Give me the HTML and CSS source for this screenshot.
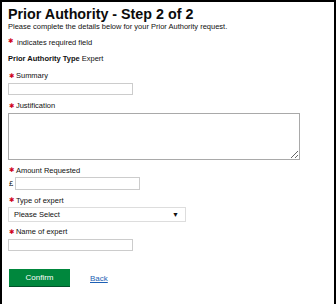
FILE: index.html
```html
<!DOCTYPE html>
<html lang="en">
<head>
  <meta charset="UTF-8" />
  <meta name="viewport" content="width=device-width, initial-scale=1.0" />
  <title>Prior Authority - Step 2 of 2</title>
  <link rel="stylesheet" href="styles.css">
</head>
<body>
  <div class="page">
    <h1 class="title">Prior Authority - Step 2 of 2</h1>
    <p class="intro">Please complete the details below for your Prior Authority request.</p>
    <p class="req-note"><span class="req">✱</span> indicates required field</p>
    <p class="type-row"><strong>Prior Authority Type</strong> Expert</p>

    <div class="field">
      <label for="summary"><span class="req">✱</span>Summary</label>
      <input type="text" id="summary" class="text-input" />
    </div>

    <div class="field">
      <label for="justification"><span class="req">✱</span>Justification</label>
      <textarea id="justification" class="text-area"></textarea>
    </div>

    <div class="field">
      <label for="amount"><span class="req">✱</span>Amount Requested</label>
      <div class="money">
        <span class="pound">£</span>
        <input type="text" id="amount" class="text-input" />
      </div>
    </div>

    <div class="field">
      <label for="expertType"><span class="req">✱</span>Type of expert</label>
      <div class="select-box" id="expertType">
        <span>Please Select</span>
        <span class="arrow">▼</span>
      </div>
    </div>

    <div class="field field-tight">
      <label for="expertName"><span class="req">✱</span>Name of expert</label>
      <input type="text" id="expertName" class="text-input" />
    </div>

    <div class="actions">
      <button class="btn-confirm">Confirm</button>
      <a href="#" class="back-link">Back</a>
    </div>
  </div>
</body>
</html>
```

FILE: styles.css
```css
html, body {
  height: 100%;
}

body {
  margin: 0;
  font-family: "Liberation Sans", Arial, sans-serif;
  color: #111;
  background: #fff;
}

.page {
  width: 336px;
  min-height: 100%;
  box-sizing: border-box;
  border: 2px solid #000;
  border-bottom: none;
  padding: 4px 5px 0 6px;
}

.title {
  margin: 0;
  font-size: 14.3px;
  line-height: 16px;
  font-weight: bold;
  color: #0b0b0b;
}

.intro {
  margin: 0;
  font-size: 7.5px;
  line-height: 10px;
}

.req-note {
  margin: 5.5px 0 0;
  font-size: 7.5px;
  line-height: 10px;
}

.type-row {
  margin: 6.5px 0 0;
  font-size: 7.5px;
  line-height: 10px;
}

.req {
  color: #d0021b;
  font-family: "DejaVu Sans", sans-serif;
  font-size: 6.5px;
  line-height: 0;
  vertical-align: 0.5px;
  margin-right: 1.5px;
}

.req-note .req {
  vertical-align: 1.5px;
}

.field {
  margin-top: 6px;
}

.type-row + .field {
  margin-top: 7px;
}

.field-tight {
  margin-top: 5px;
}

.field label {
  display: block;
  font-size: 7.5px;
  line-height: 10px;
  padding-left: 1px;
  margin-bottom: 1.5px;
}

.text-input {
  display: block;
  box-sizing: border-box;
  width: 125px;
  height: 12.5px;
  margin: 0;
  padding: 0 3px;
  border: 1px solid #ccc;
  border-radius: 0;
  font-size: 8px;
}

.text-area {
  display: block;
  box-sizing: border-box;
  width: 292px;
  height: 47px;
  margin: 0;
  padding: 2px;
  border: 1px solid #a9a9a9;
  border-radius: 0;
  font-size: 8px;
}

.money {
  display: flex;
  align-items: center;
}

.pound {
  font-size: 7.5px;
  width: 6px;
  padding-left: 1px;
}

.select-box {
  box-sizing: border-box;
  width: 178px;
  height: 15px;
  border: 1px solid #ddd;
  display: flex;
  align-items: center;
  justify-content: space-between;
  padding: 0 6px 0 5px;
  font-size: 7.5px;
}

.arrow {
  font-size: 7px;
}

.actions {
  margin-top: 18px;
  display: flex;
  align-items: center;
  gap: 20px;
}

.btn-confirm {
  width: 61px;
  height: 18px;
  margin-left: 1px;
  padding: 0;
  border: none;
  border-bottom: 1px solid #00522a;
  border-radius: 0;
  background: #00873d;
  color: #fff;
  font-family: "Liberation Sans", Arial, sans-serif;
  font-size: 8px;
  cursor: pointer;
}

.back-link {
  color: #1d5fb4;
  font-size: 8px;
  text-decoration: underline;
}
```
